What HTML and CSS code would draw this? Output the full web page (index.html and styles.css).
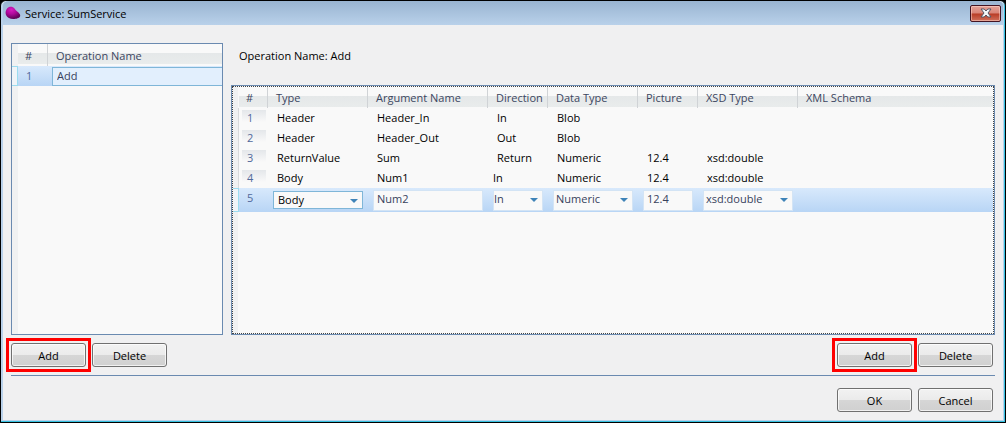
FILE: index.html
```html
<!DOCTYPE html>
<html lang="en">
<head>
  <meta charset="UTF-8">
  <meta name="viewport" content="width=device-width, initial-scale=1.0">
  <title>Service: SumService</title>
  <link rel="stylesheet" href="styles.css">
</head>
<body>
  <div class="window">

    <!-- Title bar -->
    <header class="titlebar">
      <svg class="logo" width="16" height="14" viewBox="0 0 16 14">
        <defs>
          <radialGradient id="gem" cx="0.4" cy="0.25" r="0.7">
            <stop offset="0" stop-color="#d81cc0"/>
            <stop offset="0.5" stop-color="#b0089c"/>
            <stop offset="1" stop-color="#64045c"/>
          </radialGradient>
        </defs>
        <path d="M2.500 2 C4.500 0 8 0.300 9.500 2.500 C11 5 13.500 6 15 8.500 C16 11 13.500 12.500 10.500 12.800 C6 13.500 2.500 12 1 9 C0 6.500 0.800 3.500 2.500 2 Z" fill="url(#gem)"/>
      </svg>
      <h1 class="title">Service: SumService</h1>
      <button class="close" type="button" aria-label="Close">
        <svg width="12" height="10" viewBox="0 0 12 10">
          <path d="M1 1 H4.200 L6 3 L7.800 1 H11 L8 5 L11 9 H7.800 L6 7 L4.200 9 H1 L4 5 Z" fill="#f4f6f8" stroke="#535666" stroke-width="1"/>
        </svg>
      </button>
    </header>

    <main class="content">
      <div class="panels">

        <!-- Operations -->
        <section class="operations">
          <div class="grid">
            <table>
              <colgroup>
                <col class="col-gutter">
                <col class="col-number">
                <col>
              </colgroup>
              <thead>
                <tr><td class="gutter"></td><th>#</th><th>Operation Name</th></tr>
              </thead>
              <tbody>
                <tr class="selected">
                  <td class="gutter"></td>
                  <td class="number">1</td>
                  <td class="edit"><input class="name-field" type="text" value="Add" aria-label="Operation Name"></td>
                </tr>
              </tbody>
            </table>
          </div>
          <div class="buttons">
            <span class="highlight"><button class="btn" type="button">Add</button></span>
            <button class="btn" type="button">Delete</button>
          </div>
        </section>

        <!-- Arguments of the selected operation -->
        <section class="arguments">
          <p class="caption">Operation Name: Add</p>
          <div class="grid focused">
            <table>
              <colgroup>
                <col class="col-gutter">
                <col class="col-index">
                <col class="col-type">
                <col class="col-argument">
                <col class="col-direction">
                <col class="col-data">
                <col class="col-picture">
                <col class="col-xsd">
                <col>
              </colgroup>
              <thead>
                <tr>
                  <td class="gutter"></td>
                  <th>#</th>
                  <th>Type</th>
                  <th>Argument Name</th>
                  <th>Direction</th>
                  <th>Data Type</th>
                  <th>Picture</th>
                  <th>XSD Type</th>
                  <th>XML Schema</th>
                </tr>
              </thead>
              <tbody>
                <tr>
                  <td class="gutter"></td><td class="number">1</td>
                  <td>Header</td><td>Header_In</td><td>In</td><td>Blob</td><td></td><td></td><td></td>
                </tr>
                <tr>
                  <td class="gutter"></td><td class="number">2</td>
                  <td>Header</td><td>Header_Out</td><td>Out</td><td>Blob</td><td></td><td></td><td></td>
                </tr>
                <tr>
                  <td class="gutter"></td><td class="number">3</td>
                  <td>ReturnValue</td><td>Sum</td><td>Return</td><td>Numeric</td><td>12.4</td><td>xsd:double</td><td></td>
                </tr>
                <tr>
                  <td class="gutter"></td><td class="number">4</td>
                  <td>Body</td><td>Num1</td><td class="tight">In</td><td>Numeric</td><td>12.4</td><td>xsd:double</td><td></td>
                </tr>
                <tr class="selected editing">
                  <td class="gutter"></td><td class="number">5</td>
                  <td class="edit"><span class="dropdown active"><select aria-label="Type"><option>Body</option><option>Header</option><option>ReturnValue</option></select></span></td>
                  <td class="edit"><input class="field" type="text" value="Num2" aria-label="Argument Name"></td>
                  <td class="edit"><span class="dropdown narrow"><select aria-label="Direction"><option>In</option><option>Out</option><option>Return</option></select></span></td>
                  <td class="edit"><span class="dropdown"><select aria-label="Data Type"><option>Numeric</option><option>Blob</option></select></span></td>
                  <td class="edit"><input class="field" type="text" value="12.4" aria-label="Picture"></td>
                  <td class="edit"><span class="dropdown"><select aria-label="XSD Type"><option>xsd:double</option></select></span></td>
                  <td></td>
                </tr>
              </tbody>
            </table>
          </div>
          <div class="buttons right">
            <span class="highlight"><button class="btn" type="button">Add</button></span>
            <button class="btn" type="button">Delete</button>
          </div>
        </section>
      </div>

      <footer class="footer">
        <button class="btn" type="button">OK</button>
        <button class="btn" type="button">Cancel</button>
      </footer>
    </main>
  </div>
</body>
</html>
```
FILE: styles.css
```css
* {
  box-sizing: border-box;
}

body {
  margin: 0;
  background-color: #000;
  font-family: "Open Sans", "Noto Sans", sans-serif;
  font-size: 11px;
  line-height: 16px;
  color: #000;
}

button, input, select {
  font: inherit;
  color: inherit;
}

.window {
  display: flex;
  flex-direction: column;
  min-height: 100vh;
  border: 1px solid #000;
  border-radius: 6px 6px 0 0;
  background-color: #b9d1ea;
  box-shadow: inset -1px -1px 0 #35c1e0, inset 0 1px 0 #e4eef8;
  padding: 0 2px 2px 2px;
}

/* Title bar */
.titlebar {
  display: flex;
  align-items: center;
  height: 24px;
  padding: 0 2px;
  background: linear-gradient(#99b4d1, #b9d1ea);
  border-radius: 5px 5px 0 0;
}

.title {
  flex: 1;
  margin: 0 0 0 4px;
  padding-top: 2px;
  font-size: 11px;
  font-weight: normal;
}

.close {
  display: flex;
  align-items: center;
  justify-content: center;
  width: 31px;
  height: 17px;
  padding: 0;
  border: 1px solid #431422;
  border-radius: 2px;
  background: linear-gradient(#e5a298 0%, #d98477 48%, #b83b25 52%, #d0705c 100%);
  box-shadow: inset 0 0 0 1px rgba(255, 220, 210, 0.5);
}

/* Content */
.content {
  flex: 1;
  display: flex;
  flex-direction: column;
  padding: 18px 8px 8px 8px;
  background-color: #f0f0f1;
}

.panels {
  flex: 1;
  display: flex;
  gap: 8px;
  padding-bottom: 8px;
  border-bottom: 1px solid #6a8ab0;
}

.operations, .arguments {
  display: flex;
  flex-direction: column;
}

.operations {
  width: 212px;
}

.arguments {
  flex: 1;
}

.caption {
  height: 42px;
  margin: 0;
  padding: 5px 8px;
}

.grid {
  flex: 1;
  border: 1px solid #6a8ab0;
  background: linear-gradient(90deg, #f0f1f2 6px, #f9f9f9 6px);
}

.focused {
  outline: 1px dotted #444;
  outline-offset: -2px;
  padding: 1px;
}

/* Tables */
table {
  width: 100%;
  table-layout: fixed;
  border-collapse: separate;
  border-spacing: 0;
}

th, td {
  height: 20px;
  padding: 0 0 0 10px;
  text-align: left;
  font-weight: normal;
  white-space: nowrap;
}

th {
  height: 21px;
  padding-left: 8px;
  border-left: 1px solid #d0d3d6;
  color: #3c4660;
  background: linear-gradient(#f9f9f9 9px, #e5e8e9 9px, #e9ecec 20px, #f9f9f9 20px);
}

.gutter {
  padding: 0;
  border-right: 1px solid #d8dadc;
}

thead .gutter, th:nth-child(2) {
  border-color: transparent;
}

th:nth-child(2) {
  padding-left: 6px;
}

.number {
  padding-left: 8px;
  color: #51699b;
  background: linear-gradient(#e4e7ea, #f9f9f9) no-repeat 3px 2px / 24px 12px;
}

.tight {
  padding-left: 6px;
}

.selected {
  background: linear-gradient(#d8e9fc, #b8d5f5);
}

.selected .number {
  background: none;
}

.selected .gutter {
  border: 1px solid #9cdcf0;
  border-left: none;
  background-color: #f0f4f8;
}

.editing td {
  height: 24px;
  color: #37415c;
}

.editing td.number {
  padding-bottom: 4px;
  color: #51699b;
}

td.edit {
  padding: 0 4px 0 6px;
}

.operations th {
  height: 22px;
  padding-top: 2px;
}

.operations td.edit {
  padding: 0 0 0 5px;
}

.col-gutter { width: 6px; }
.col-number { width: 29px; }
.col-index { width: 28px; }
.col-type { width: 100px; }
.col-argument { width: 120px; }
.col-direction { width: 60px; }
.col-data { width: 90px; }
.col-picture { width: 60px; }
.col-xsd { width: 100px; }

/* Editors */
.name-field, .field {
  display: block;
  width: 100%;
  margin: 0;
  border-radius: 0;
}

.name-field {
  height: 19px;
  padding: 0 4px 1px 4px;
  border: 1px solid #7fb6d8;
  border-right: none;
  background-color: #e2effd;
  color: #37415c;
}

.field {
  height: 21px;
  padding: 0 2px 3px 3px;
  border: 1px solid #d3e4f5;
  background-color: #f9f9f9;
}

.dropdown {
  display: block;
  position: relative;
}

.dropdown select {
  display: block;
  width: 100%;
  height: 21px;
  margin: 0;
  padding: 0 0 3px 2px;
  border: 1px solid #d3e4f5;
  border-radius: 0;
  background-color: #f9f9f9;
  appearance: none;
}

.dropdown::after {
  content: "";
  position: absolute;
  top: 8px;
  right: 5px;
  border: 4px solid transparent;
  border-top: 4px solid #3f83b8;
  border-bottom: none;
  pointer-events: none;
}

.dropdown.narrow select {
  padding-left: 0;
}

.dropdown.active select {
  height: 18px;
  padding: 0 0 0 4px;
  border-color: #7fb6d8;
  color: #000;
}

/* Buttons */
.buttons, .footer {
  display: flex;
  gap: 6px;
}

.buttons {
  padding-top: 8px;
}

.right, .footer {
  justify-content: flex-end;
  padding-right: 2px;
}

.footer {
  padding-top: 12px;
}

.btn {
  width: 75px;
  height: 24px;
  padding: 2px 0 0 0;
  border: 1px solid #707070;
  border-radius: 3px;
  background: linear-gradient(#f2f2f2 0%, #ebebeb 48%, #d6d6d6 52%, #d0d0d0 100%);
  box-shadow: inset 0 0 0 1px rgba(255, 255, 255, 0.7);
}

.highlight {
  display: flex;
  outline: 3px solid #f00;
  outline-offset: 2px;
}
```
